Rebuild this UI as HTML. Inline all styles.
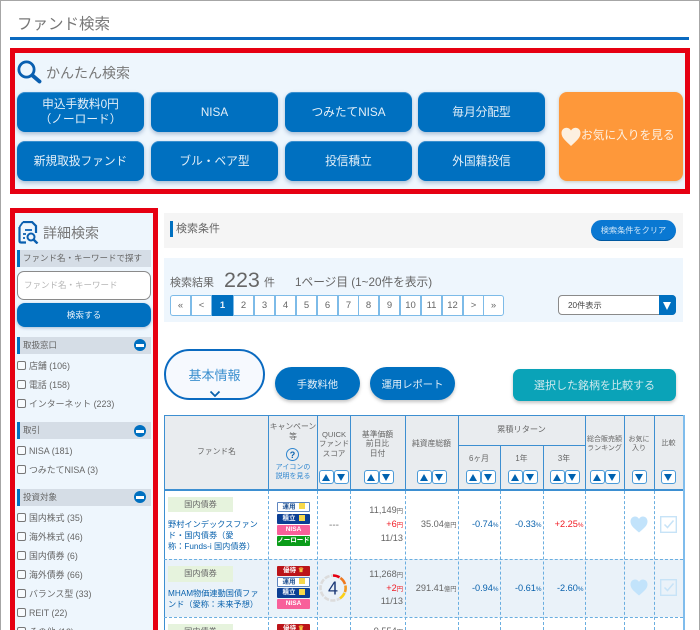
<!DOCTYPE html>
<html lang="ja"><head><meta charset="utf-8"><title>ファンド検索</title>
<style>
html,body{margin:0;padding:0;background:#fff}
#p{position:relative;width:700px;height:630px;overflow:hidden;background:#fff;font-family:"Liberation Sans","Noto Sans CJK JP",sans-serif;color:#666;filter:blur(.25px)}
#p div,#p span.a,#p svg{position:absolute;box-sizing:border-box}
.c{display:flex;align-items:center;justify-content:center;text-align:center}
.b{background:#0070c0;color:#e3eff8;border-radius:8px;font-size:11.7px;line-height:15px;width:127px;height:40px;box-shadow:0 2px 4px rgba(60,100,150,.4),inset 0 1px 0 rgba(160,200,235,.35)}
.bar{left:17px;width:134px;height:17px;background:#d5dde6;border-left:3px solid #0070c0;font-size:8.5px;line-height:17px;padding-left:3px;color:#666}
.m{left:134px;width:12px;height:12px;border-radius:50%;background:#0070c0}
.m:after{content:"";position:absolute;left:2px;top:4.5px;width:8px;height:3px;background:#fff}
.k{left:17px;width:9px;height:9px;border:1px solid #777;border-radius:2px;background:#f8fbfe}
.t{left:29px;font-size:8.9px;line-height:14px;white-space:nowrap;color:#666}
.pg{top:295px;width:21px;height:21px;background:#fff;border:1px solid #7dbbe8;margin-left:-1px;font-size:9.5px;line-height:19px;text-align:center;color:#666}
.v{width:1px;background:#3d8fd1}
.dv{width:0;border-left:1px dashed #6aaee0}
.dh{height:0;left:164px;width:519px;border-top:1px dashed #6aaee0}
.h{font-size:7.8px;line-height:9.5px;text-align:center;color:#666;white-space:nowrap}
.s{width:15px;height:14px;background:#fff;border:1.5px solid #4a9ad8;border-radius:3px;top:470px}
.u:after,.d:after{content:"";position:absolute;left:1.500px;top:2.500px;border-left:4.5px solid transparent;border-right:4.5px solid transparent}
.u:after{border-bottom:7px solid #0062b0}
.d:after{border-top:7px solid #0062b0}
.bd{left:277px;width:33px;height:10px;border-radius:1px;font-size:6.5px;line-height:10px;text-align:center;color:#fff;font-weight:bold}
.un{background:#fff;border:1px solid #5f86c0;color:#1d4f91;line-height:8px}
.tu{background:#0b3f94}.ni{background:#f8609a}.no{background:#0a9c19}.yu{background:#bb1419}
.ti{display:inline-block;width:6px;height:6px;background:#f7d84a;margin-left:3px;vertical-align:-.5px}
.cr{color:#f5c542;margin-left:2px}
.cat{left:168px;width:65px;height:15px;background:#e6f3dd;font-size:8.2px;line-height:15px;text-align:center;color:#666}
.n{left:168px;width:96px;font-size:8.2px;line-height:11.2px;color:#0a62ad;white-space:nowrap}
.r{font-size:9.2px;line-height:14px;text-align:right;white-space:nowrap}
.sm{font-size:6.3px}
</style></head><body><div id="p">
<div style="left:0;top:0;width:700px;height:1px;background:#a6a6a6"></div>
<div style="left:0;top:0;width:1px;height:630px;background:#a6a6a6"></div>
<div style="left:699px;top:0;width:1px;height:630px;background:#a6a6a6"></div>

<div style="left:17px;top:14px;font-size:15.5px;line-height:22px;color:#777;white-space:nowrap">ファンド検索</div>
<div style="left:10px;top:37px;width:679px;height:2.500px;background:#0a6ac0"></div>

<div style="left:10px;top:48px;width:680px;height:146px;border:5px solid #e60012;background:#eef6fd"></div>
<svg style="left:17px;top:59px" width="25" height="25" viewBox="0 0 25 25"><circle cx="9.500" cy="10.500" r="7.600" fill="none" stroke="#0a5fb0" stroke-width="2.800"/><path d="M15.500 16.500l7 6" stroke="#0a5fb0" stroke-width="3.800" stroke-linecap="round"/></svg>
<div style="left:46px;top:62.500px;font-size:14px;line-height:20px;color:#777;white-space:nowrap">かんたん検索</div>
<div class="b c" style="left:17px;top:92px">申込手数料0円<br>（ノーロード）</div>
<div class="b c" style="left:151px;top:92px">NISA</div>
<div class="b c" style="left:285px;top:92px">つみたてNISA</div>
<div class="b c" style="left:418px;top:92px">毎月分配型</div>
<div class="b c" style="left:17px;top:141px">新規取扱ファンド</div>
<div class="b c" style="left:151px;top:141px">ブル・ベア型</div>
<div class="b c" style="left:285px;top:141px">投信積立</div>
<div class="b c" style="left:418px;top:141px">外国籍投信</div>
<div style="left:559px;top:92px;width:124px;height:89px;background:#fe983a;border-radius:8px;box-shadow:0 1px 3px rgba(120,100,60,.3)"></div>
<svg style="left:561px;top:127px" width="20" height="20" viewBox="0 0 20 20"><path d="M10 19C5 14 .5 11 .5 6 .5 2.500 3 .7 5.500 .7 7.500 .7 9 1.800 10 3.500 11 1.800 12.500 .7 14.500 .7 17 .7 19.500 2.500 19.500 6 19.500 11 15 14 10 19Z" fill="#fdf0e0"/></svg>
<div style="left:581px;top:127px;font-size:11.7px;line-height:18px;color:#fdf0e0;white-space:nowrap">お気に入りを見る</div>

<div style="left:10px;top:208px;width:148px;height:440px;border:5px solid #e60012;background:#eef6fd"></div>
<svg style="left:18px;top:221px" width="21" height="23" viewBox="0 0 21 23"><path d="M5 1h9l4 4v7M1.500 6v14q0 1.500 1.500 1.500h5" fill="none" stroke="#0a5fb0" stroke-width="2.200"/><path d="M5 1L1.500 6M7 9h7M5 13h3M5 17h2" stroke="#0a5fb0" stroke-width="1.800" fill="none"/><circle cx="13" cy="16" r="3.500" fill="none" stroke="#0a5fb0" stroke-width="2"/><path d="M15.500 18.500l4 4" stroke="#0a5fb0" stroke-width="2.400"/></svg>
<div style="left:43px;top:223px;font-size:14px;line-height:20px;color:#777;white-space:nowrap">詳細検索</div>
<div class="bar" style="top:250px;white-space:nowrap;overflow:hidden">ファンド名・キーワードで探す</div>
<div style="left:17px;top:271px;width:134px;height:29px;background:#fff;border:1px solid #8a8a8a;border-radius:7px;font-size:8.5px;line-height:27px;padding-left:6px;color:#b5b5b5;white-space:nowrap">ファンド名・キーワード</div>
<div class="c" style="left:17px;top:303px;width:134px;height:24px;background:#0070c0;border-radius:8px;color:#eaf3fa;font-size:8.6px;box-shadow:0 1px 3px rgba(60,100,150,.4)">検索する</div>

<div class="bar" style="top:337px">取扱窓口</div><div class="m" style="top:339px"></div>
<div class="k" style="top:361px"></div><div class="t" style="top:359px">店舗 (106)</div>
<div class="k" style="top:380px"></div><div class="t" style="top:378px">電話 (158)</div>
<div class="k" style="top:399px"></div><div class="t" style="top:397px">インターネット (223)</div>
<div class="bar" style="top:422px">取引</div><div class="m" style="top:425px"></div>
<div class="k" style="top:446px"></div><div class="t" style="top:444px">NISA (181)</div>
<div class="k" style="top:465px"></div><div class="t" style="top:463px">つみたてNISA (3)</div>
<div class="bar" style="top:489px">投資対象</div><div class="m" style="top:491px"></div>
<div class="k" style="top:513px"></div><div class="t" style="top:511px">国内株式 (35)</div>
<div class="k" style="top:532px"></div><div class="t" style="top:530px">海外株式 (46)</div>
<div class="k" style="top:551px"></div><div class="t" style="top:549px">国内債券 (6)</div>
<div class="k" style="top:570px"></div><div class="t" style="top:568px">海外債券 (66)</div>
<div class="k" style="top:589px"></div><div class="t" style="top:587px">バランス型 (33)</div>
<div class="k" style="top:608px"></div><div class="t" style="top:606px">REIT (22)</div>
<div class="k" style="top:627px"></div><div class="t" style="top:625px">その他 (12)</div>

<div style="left:164px;top:213px;width:519px;height:35px;background:#f5f5f5"></div>
<div style="left:170px;top:221px;width:3px;height:16px;background:#0070c0"></div>
<div style="left:176px;top:221px;font-size:11px;line-height:16px;color:#666">検索条件</div>
<div class="c" style="left:591px;top:220px;width:85px;height:21px;background:#0a78d2;border-radius:11px;color:#cfe6f8;font-size:8.2px;border-bottom:1px solid #0058a0">検索条件をクリア</div>

<div style="left:164px;top:258px;width:519px;height:64px;background:#eef6fd"></div>
<div style="left:170px;top:275px;font-size:11px;line-height:16px;color:#666">検索結果</div>
<div style="left:224px;top:266px;font-size:21.5px;line-height:28px;color:#666">223</div>
<div style="left:264px;top:275px;font-size:11px;line-height:16px">件</div>
<div style="left:295px;top:275px;font-size:11.7px;line-height:16px;white-space:nowrap">1ページ目 (1~20件を表示)</div>

<div class="pg" style="left:171px;border-radius:3px 0 0 3px">«</div>
<div class="pg" style="left:192px">&lt;</div>
<div class="pg" style="left:213px;background:#0070c0;color:#e8f2fa;border-color:#0070c0;font-weight:bold">1</div>
<div class="pg" style="left:234px">2</div>
<div class="pg" style="left:255px">3</div>
<div class="pg" style="left:276px">4</div>
<div class="pg" style="left:297px">5</div>
<div class="pg" style="left:318px">6</div>
<div class="pg" style="left:339px">7</div>
<div class="pg" style="left:359px">8</div>
<div class="pg" style="left:380px">9</div>
<div class="pg" style="left:401px">10</div>
<div class="pg" style="left:422px">11</div>
<div class="pg" style="left:443px">12</div>
<div class="pg" style="left:464px">&gt;</div>
<div class="pg" style="left:484px;border-radius:0 3px 3px 0">»</div>

<div style="left:558px;top:295px;width:118px;height:20px;background:#fff;border:1px solid #8a8a8a;border-radius:4px;font-size:8.2px;line-height:19px;padding-left:9px;color:#444">20件表示</div>
<div style="left:659px;top:295px;width:17px;height:20px;background:#0070c0;border-radius:0 4px 4px 0"></div>
<div style="left:663px;top:302px;width:0;height:0;border-left:4.5px solid transparent;border-right:4.5px solid transparent;border-top:8px solid #fff"></div>

<div style="left:164px;top:349px;width:101px;height:51px;border:2px solid #0a6ac0;border-radius:26px;background:#f6f9fe"></div>
<div style="left:164px;top:366px;width:101px;text-align:center;font-size:13px;line-height:20px;color:#3c90cf">基本情報</div>
<svg style="left:209px;top:390px" width="12" height="8" viewBox="0 0 12 8"><path d="M1.500 1.500L6 6l4.500-4.500" fill="none" stroke="#0a62ad" stroke-width="1.800"/></svg>
<div class="c" style="left:275px;top:367px;width:85px;height:33px;background:#0070c0;border-radius:17px;color:#e3eff8;font-size:10.3px;box-shadow:0 2px 3px rgba(90,90,90,.35)">手数料他</div>
<div class="c" style="left:370px;top:367px;width:85px;height:33px;background:#0070c0;border-radius:17px;color:#e3eff8;font-size:10.3px;box-shadow:0 2px 3px rgba(90,90,90,.35)">運用レポート</div>
<div class="c" style="left:513px;top:369px;width:163px;height:32px;background:#0aa3b8;border-radius:7px;color:#cfe9ee;font-size:11px;box-shadow:0 2px 3px rgba(90,90,90,.35)">選択した銘柄を比較する</div>

<!-- table backgrounds -->
<div style="left:164px;top:416px;width:519px;height:74px;background:#e9ecef"></div>
<div style="left:164px;top:559px;width:519px;height:58px;background:#eaf2f9"></div>
<!-- header lines -->
<div style="left:164px;top:415px;width:520px;height:1px;background:#3d8fd1"></div>
<div style="left:164px;top:489px;width:520px;height:2px;background:#3d8fd1"></div>
<div style="left:458px;top:445px;width:127px;height:1px;background:#3d8fd1"></div>
<div class="v" style="left:164px;top:415px;height:215px"></div>
<div class="v" style="left:268px;top:415px;height:75px"></div>
<div class="v" style="left:317px;top:415px;height:75px"></div>
<div class="v" style="left:350px;top:415px;height:75px"></div>
<div class="v" style="left:405px;top:415px;height:75px"></div>
<div class="v" style="left:458px;top:415px;height:75px"></div>
<div class="v" style="left:500px;top:445px;height:45px"></div>
<div class="v" style="left:543px;top:445px;height:45px"></div>
<div class="v" style="left:585px;top:415px;height:75px"></div>
<div class="v" style="left:624px;top:415px;height:75px"></div>
<div class="v" style="left:654px;top:415px;height:75px"></div>
<div style="left:683px;top:415px;width:1.500px;height:215px;background:#7fbcec"></div>
<!-- body dashed lines -->
<div class="dv" style="left:268px;top:491px;height:139px"></div>
<div class="dv" style="left:317px;top:491px;height:139px"></div>
<div class="dv" style="left:350px;top:491px;height:139px"></div>
<div class="dv" style="left:405px;top:491px;height:139px"></div>
<div class="dv" style="left:458px;top:491px;height:139px"></div>
<div class="dv" style="left:500px;top:491px;height:139px"></div>
<div class="dv" style="left:543px;top:491px;height:139px"></div>
<div class="dv" style="left:585px;top:491px;height:139px"></div>
<div class="dv" style="left:624px;top:491px;height:139px"></div>
<div class="dv" style="left:654px;top:491px;height:139px"></div>
<div class="dh" style="top:559px"></div>
<div class="dh" style="top:617px"></div>

<!-- header text -->
<div class="h" style="left:165px;top:447px;width:103px">ファンド名</div>
<div class="h" style="left:268px;top:422px;width:50px">キャンペーン<br>等</div>
<div class="c" style="left:286px;top:448px;width:13px;height:13px;border:1.500px solid #2f86cf;border-radius:50%;font-size:9px;color:#0a62ad;font-weight:bold">?</div>
<div class="h" style="left:268px;top:464px;width:50px;color:#2f86cf;font-size:7px;line-height:8.500px">アイコンの<br>説明を見る</div>
<div class="h" style="left:317px;top:429.500px;width:34px;font-size:7.6px">QUICK<br>ファンド<br>スコア</div>
<div class="h" style="left:350px;top:429.500px;width:55px">基準価額<br>前日比<br>日付</div>
<div class="h" style="left:405px;top:438.500px;width:53px">純資産総額</div>
<div class="h" style="left:458px;top:425px;width:127px;font-size:8.2px">累積リターン</div>
<div class="h" style="left:458px;top:454px;width:42px">6ヶ月</div>
<div class="h" style="left:500px;top:454px;width:43px">1年</div>
<div class="h" style="left:543px;top:454px;width:42px">3年</div>
<div class="h" style="left:585px;top:436px;width:39px;font-size:7px;line-height:8.500px">総合販売額<br>ランキング</div>
<div class="h" style="left:624px;top:436px;width:30px;font-size:7px;line-height:8.500px">お気に<br>入り</div>
<div class="h" style="left:654px;top:439px;width:29px;font-size:7px">比較</div>
<!-- sort buttons -->
<div class="s u" style="left:319px"></div><div class="s d" style="left:334px"></div>
<div class="s u" style="left:364px"></div><div class="s d" style="left:379px"></div>
<div class="s u" style="left:417px"></div><div class="s d" style="left:432px"></div>
<div class="s u" style="left:466px"></div><div class="s d" style="left:481px"></div>
<div class="s u" style="left:508px"></div><div class="s d" style="left:523px"></div>
<div class="s u" style="left:550px"></div><div class="s d" style="left:565px"></div>
<div class="s u" style="left:590px"></div><div class="s d" style="left:605px"></div>
<div class="s d" style="left:632px"></div>
<div class="s d" style="left:661px"></div>

<!-- row 1 -->
<div class="cat" style="top:497px">国内債券</div>
<div class="n" style="top:518.500px">野村インデックスファン<br>ド・国内債券（愛<br>称：Funds-i 国内債券）</div>
<div class="bd un" style="top:502px">運用<span class="ti"></span></div>
<div class="bd tu" style="top:514px">積立<span class="ti"></span></div>
<div class="bd ni" style="top:525px">NISA</div>
<div class="bd no" style="top:536px">ノーロード</div>
<div class="c" style="left:318px;top:518px;width:32px;height:14px;font-size:10px;color:#777">---</div>
<div class="r" style="left:351px;top:503px;width:52px"><span style="color:#666">11,149</span><span class="sm">円</span></div>
<div class="r" style="left:351px;top:517px;width:52px;color:#f01c24">+6<span class="sm">円</span></div>
<div class="r" style="left:351px;top:531px;width:52px;color:#666">11/13</div>
<div class="r" style="left:406px;top:517px;width:50.500px">35.04<span class="sm">億円</span></div>
<div class="r" style="left:459px;top:517px;width:39.500px;color:#0a62ad">-0.74<span class="sm">%</span></div>
<div class="r" style="left:501px;top:517px;width:40.500px;color:#0a62ad">-0.33<span class="sm">%</span></div>
<div class="r" style="left:544px;top:517px;width:39.500px;color:#f01c24">+2.25<span class="sm">%</span></div>
<svg style="left:630px;top:516px" width="18" height="17" viewBox="0 0 20 19"><path d="M10 18.500C5 14 .5 11 .5 6 .5 2.500 3 .5 5.500 .5 7.500 .5 9 1.500 10 3.200 11 1.500 12.500 .5 14.500 .5 17 .5 19.500 2.500 19.500 6 19.500 11 15 14 10 18.500Z" fill="#c2e3fb"/></svg>
<svg style="left:660px;top:516px" width="18" height="17" viewBox="0 0 18 17"><rect x=".7" y=".7" width="15.600" height="15.600" fill="none" stroke="#c7e3f7" stroke-width="1.400"/><path d="M4.500 8.500l3 3 6-7" fill="none" stroke="#c7e3f7" stroke-width="1.500"/></svg>

<!-- row 2 -->
<div class="cat" style="top:566px;height:16px;line-height:16px">国内債券</div>
<div class="n" style="top:587.500px">MHAM物価連動国債ファ<br>ンド（愛称：未来予想）</div>
<div class="bd yu" style="top:566px">優待<span class="cr">♛</span></div>
<div class="bd un" style="top:577px">運用<span class="ti"></span></div>
<div class="bd tu" style="top:588px">積立<span class="ti"></span></div>
<div class="bd ni" style="top:599px">NISA</div>
<svg style="left:319px;top:573px" width="28" height="30" viewBox="0 0 28 30"><circle cx="14" cy="15" r="12.500" fill="none" stroke="#dcdcdc" stroke-width="2.600" stroke-dasharray="5.200 1.350" stroke-dashoffset="2.600"/><path d="M14 2.500A12.500 12.500 0 0 1 20.500 4.300" fill="none" stroke="#e60012" stroke-width="2.600"/><path d="M21.500 5A12.500 12.500 0 0 1 26 11" fill="none" stroke="#f0781e" stroke-width="2.600"/><path d="M26.400 12.500A12.500 12.500 0 0 1 26 19" fill="none" stroke="#f59a23" stroke-width="2.600"/><path d="M25.500 20A12.500 12.500 0 0 1 21 25.300" fill="none" stroke="#fcd116" stroke-width="2.600"/><text x="14" y="21.500" text-anchor="middle" font-size="18" fill="#1c3a78" font-family="Liberation Sans">4</text></svg>
<div class="r" style="left:351px;top:567px;width:52px">11,268<span class="sm">円</span></div>
<div class="r" style="left:351px;top:581px;width:52px;color:#f01c24">+2<span class="sm">円</span></div>
<div class="r" style="left:351px;top:594px;width:52px">11/13</div>
<div class="r" style="left:406px;top:581px;width:50.500px">291.41<span class="sm">億円</span></div>
<div class="r" style="left:459px;top:581px;width:39.500px;color:#0a62ad">-0.94<span class="sm">%</span></div>
<div class="r" style="left:501px;top:581px;width:40.500px;color:#0a62ad">-0.61<span class="sm">%</span></div>
<div class="r" style="left:544px;top:581px;width:39.500px;color:#0a62ad">-2.60<span class="sm">%</span></div>
<svg style="left:630px;top:579px" width="18" height="17" viewBox="0 0 20 19"><path d="M10 18.500C5 14 .5 11 .5 6 .5 2.500 3 .5 5.500 .5 7.500 .5 9 1.500 10 3.200 11 1.500 12.500 .5 14.500 .5 17 .5 19.500 2.500 19.500 6 19.500 11 15 14 10 18.500Z" fill="#c2e3fb"/></svg>
<svg style="left:660px;top:579px" width="18" height="17" viewBox="0 0 18 17"><rect x=".7" y=".7" width="15.600" height="15.600" fill="none" stroke="#c7e3f7" stroke-width="1.400"/><path d="M4.500 8.500l3 3 6-7" fill="none" stroke="#c7e3f7" stroke-width="1.500"/></svg>

<!-- row 3 -->
<div class="cat" style="top:624px">国内債券</div>
<div class="bd yu" style="top:624px">優待<span class="cr">♛</span></div>
<div class="r" style="left:351px;top:624px;width:52px">9,554<span class="sm">円</span></div>
</div></body></html>
